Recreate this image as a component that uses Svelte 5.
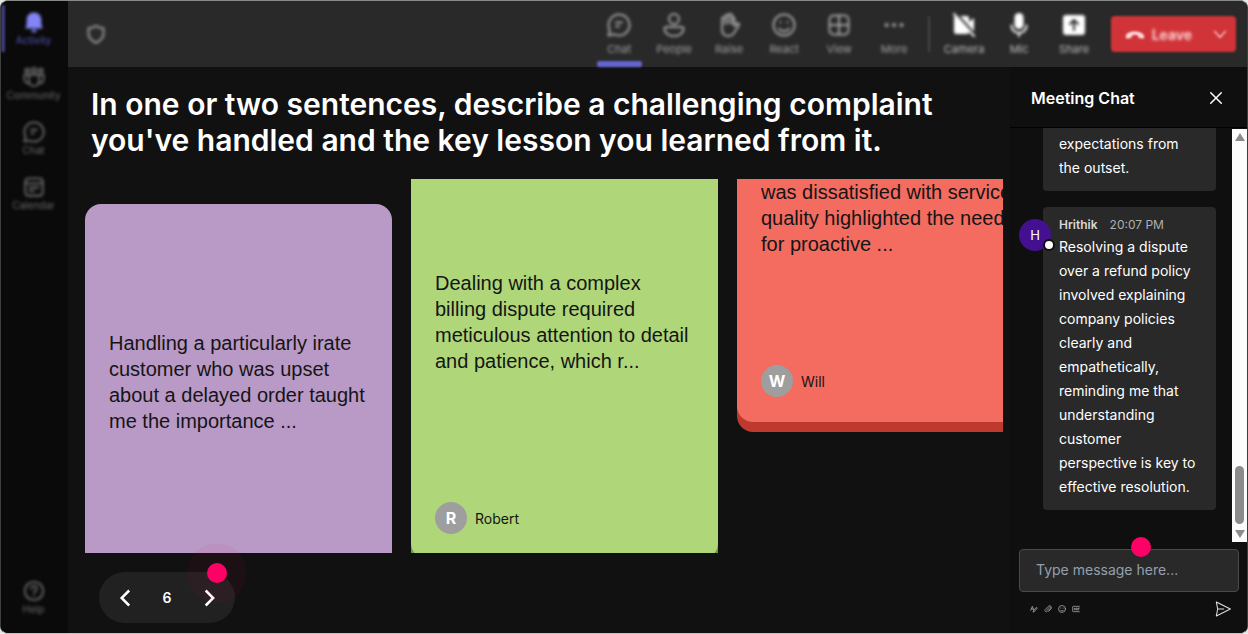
<script lang="ts">
  interface Item { id: string; label: string; }
  interface Message { name: string; time?: string; text: string; }

  const navItems: Item[] = [
    { id: 'bell', label: 'Activity' },
    { id: 'community', label: 'Community' },
    { id: 'chat', label: 'Chat' },
    { id: 'calendar', label: 'Calendar' },
  ];

  const meetingTools: Item[] = [
    { id: 'chat', label: 'Chat' },
    { id: 'people', label: 'People' },
    { id: 'raise', label: 'Raise' },
    { id: 'react', label: 'React' },
    { id: 'view', label: 'View' },
    { id: 'more', label: 'More' },
  ];

  const deviceTools: Item[] = [
    { id: 'camera', label: 'Camera' },
    { id: 'mic', label: 'Mic' },
    { id: 'share', label: 'Share' },
  ];

  // offset is how far the column has scrolled within the board
  const cards = [
    {
      tone: 'lilac', offset: 25, height: 414, author: '',
      text: 'Handling a particularly irate customer who was upset about a delayed order taught me the importance ...',
    },
    {
      tone: 'green', offset: -36, height: 416, author: 'Robert',
      text: 'Dealing with a complex billing dispute required meticulous attention to detail and patience, which r...',
    },
    {
      tone: 'red', offset: -133, height: 376, author: 'Will',
      text: 'Working with a client who was dissatisfied with service quality highlighted the need for proactive ...',
    },
  ];

  // a message without a time continues the one before it
  const messages: Message[] = [
    { name: 'Julia', text: 'I now set clear expectations from the outset.' },
    {
      name: 'Hrithik', time: '20:07 PM',
      text: 'Resolving a dispute over a refund policy involved explaining company policies clearly and empathetically, reminding me that understanding customer perspective is key to effective resolution.',
    },
  ];

  let activeNav = $state('bell');
  let activeTool = $state('chat');
  let page = $state(6);
  let draft = $state('');
</script>

{#snippet icon(id: string)}
  <svg class="icon" viewBox="0 0 24 24" fill="none" stroke="currentColor" stroke-width="2" stroke-linecap="round" stroke-linejoin="round" aria-hidden="true">
    {#if id === 'bell'}
      <path d="M12 1.500c-5 0-8 3.700-8 8v5L2.500 19h19L20 14.500v-5c0-4.300-3-8-8-8zM9 20.500a3 3 0 0 0 6 0z" fill="currentColor" stroke="none" />
    {:else if id === 'community'}
      <path d="M6.500 9.500h11v7a5.500 5.500 0 0 1-11 0zM6 9.500H1.500v5a4.500 4.500 0 0 0 5 4.500M18 9.500h4.500v5a4.500 4.500 0 0 1-5 4.500" />
      <circle cx="12" cy="4.500" r="2.500" /><circle cx="4.500" cy="5" r="2" /><circle cx="19.500" cy="5" r="2" />
    {:else if id === 'chat'}
      <path d="M12 1.500a10.500 10.500 0 1 1-5 19.700L1.500 22.500l1.300-5.500A10.500 10.500 0 0 1 12 1.500z" /><path d="M9 9.500h6M9 13.500h3" />
    {:else if id === 'calendar'}
      <rect x="2.500" y="2.500" width="19" height="19" rx="3.500" /><path d="M2.500 8h19M7 12.500h10M7 16.500h5" />
    {:else if id === 'help'}
      <circle cx="12" cy="12" r="10" /><path d="M9 9.500a3 3 0 1 1 4.500 2.600c-1 .6-1.500 1-1.500 2.200M12 17.300v.1" />
    {:else if id === 'people'}
      <circle cx="12" cy="6" r="5" /><path d="M4 14h16a1.500 1.500 0 0 1 1.500 1.500c0 4.500-4 7.500-9.500 7.500s-9.500-3-9.500-7.500A1.500 1.500 0 0 1 4 14z" />
    {:else if id === 'raise'}
      <path d="M5 12V6a1.500 1.500 0 0 1 3.300 0V3.500a1.500 1.500 0 0 1 3.300 0V2.500a1.500 1.500 0 0 1 3.300 0v2a1.500 1.500 0 0 1 2.600 1V13l2.500-2.500c1.500-.8 2.500.5 2 1.500l-5 8c-1.500 2.300-3 3-5.500 3-4.500 0-6.500-3-6.500-7z" />
      <path d="M8.300 6v5M11.600 3.500v7M15 4.500V11" />
    {:else if id === 'react'}
      <circle cx="12" cy="12" r="10.500" /><path d="M7 15.500c2 3.500 8 3.500 10 0M8.500 9v.5M15.500 9v.5" />
    {:else if id === 'view'}
      <rect x="2.500" y="2.500" width="19" height="19" rx="4" /><path d="M12 2.500v19M2.500 12h19" />
    {:else if id === 'more'}
      <path d="M4.500 12h.1M12 12h.1M19.500 12h.1" stroke-width="4" />
    {:else if id === 'camera'}
      <path d="M2 5a2 2 0 0 1 2-2h11a2 2 0 0 1 2 2v4l5-4v14l-5-4v4a2 2 0 0 1-2 2H4a2 2 0 0 1-2-2z" fill="currentColor" stroke="none" />
      <path d="M6 3l17 19" stroke="#292929" stroke-width="3" /><path d="M2 1l20 22" />
    {:else if id === 'mic'}
      <rect x="7.500" y="0" width="9" height="16" rx="4.500" fill="currentColor" stroke="none" />
      <path d="M4.500 12.500a7.500 7.500 0 0 0 15 0M12 20v3" />
    {:else if id === 'share'}
      <rect x="1" y="2" width="22" height="20" rx="3" fill="currentColor" stroke="none" />
      <path d="M12 17V7M8 11l4-4 4 4" stroke="#292929" />
    {:else if id === 'shield'}
      <path d="M12 2c2.500 2 5.500 3 9 3v6c0 5.500-3.500 9-9 11.500C6.500 20 3 16.500 3 11V5c3.500 0 6.500-1 9-3z" stroke-width="3" />
    {:else if id === 'hangup'}
      <path d="M1 15c-.3-8 21.300-8 22 0 .1 2.300-1 2.800-2.500 2.500l-3.300-.8c-1.200-.4-1.700-1.200-1.700-3.200-2-.9-5-.9-7 0 0 2-.5 2.800-1.700 3.200l-3.300.8C2 17.800 1 17.300 1 15z" fill="currentColor" stroke="none" />
    {:else if id === 'down'}
      <path d="M4 8l8 9 8-9" />
    {:else if id === 'prev'}
      <path d="M17 3l-9 9 9 9" stroke-width="3" stroke-linecap="butt" stroke-linejoin="miter" />
    {:else if id === 'next'}
      <path d="M8 3l9 9-9 9" stroke-width="3" stroke-linecap="butt" stroke-linejoin="miter" />
    {:else if id === 'close'}
      <path d="M3 3l18 18M21 3L3 21" stroke-width="2.500" />
    {:else if id === 'format'}
      <path d="M2 16l5-12 4 11M4 12h6M10 21l3-1 9-11-3-2-8 10z" />
    {:else if id === 'attach'}
      <path d="M8 15l8-8a2 2 0 0 1 3 3l-9 9a4 4 0 0 1-6-6l9-9a5.500 5.500 0 0 1 8 8l-7 7" />
    {:else if id === 'gif'}
      <path d="M22 4H4a2 2 0 0 0-2 2v12a2 2 0 0 0 2 2h18M10 10H7v4h3v-2M14 9v6M18 15V9h3M18 12h3" />
    {:else if id === 'send'}
      <path d="M2 1.500L23 12 2 22.500 4 12zM4 12h9" stroke-width="1.600" />
    {/if}
  </svg>
{/snippet}

<div class="app">
  <nav class="sidebar" aria-label="Workspace">
    {#each navItems as item (item.label)}
      <button class="nav-btn" class:active={activeNav === item.id} onclick={() => (activeNav = item.id)}>
        {@render icon(item.id)}
        <span>{item.label}</span>
      </button>
    {/each}
    <button class="nav-btn help">
      {@render icon('help')}
      <span>Help</span>
    </button>
  </nav>

  <div class="workspace">
    <header class="topbar">
      <div class="shield">{@render icon('shield')}</div>
      <div class="tools">
        {#each meetingTools as tool (tool.id)}
          <button class="tool" class:active={activeTool === tool.id} onclick={() => (activeTool = tool.id)}>
            {@render icon(tool.id)}
            <span>{tool.label}</span>
          </button>
        {/each}
      </div>
      <div class="divider"></div>
      <div class="tools devices">
        {#each deviceTools as tool (tool.id)}
          <button class="tool">
            {@render icon(tool.id)}
            <span>{tool.label}</span>
          </button>
        {/each}
      </div>
      <div class="leave">
        <button class="leave-btn">{@render icon('hangup')}<span>Leave</span></button>
        <button class="leave-menu" aria-label="Leave options">{@render icon('down')}</button>
      </div>
    </header>

    <div class="content">
      <main class="stage">
        <h1>In one or two sentences, describe a challenging complaint you've handled and the key lesson you learned from it.</h1>

        <div class="board">
          {#each cards as card (card.tone)}
            <article class="card {card.tone}" style="margin-top: {card.offset}px; height: {card.height}px">
              <p>{card.text}</p>
              <footer>
                {#if card.author}
                  <span class="initial">{card.author[0]}</span>
                  <span>{card.author}</span>
                {/if}
              </footer>
            </article>
          {/each}
        </div>

        <div class="pager">
          <button aria-label="Previous page" onclick={() => (page = Math.max(1, page - 1))}>{@render icon('prev')}</button>
          <span class="page">{page}</span>
          <button aria-label="Next page" onclick={() => (page += 1)}>{@render icon('next')}</button>
          <span class="hotspot halo"></span>
        </div>
      </main>

      <aside class="chat">
        <div class="chat-head">
          <h2>Meeting Chat</h2>
          <button aria-label="Close chat">{@render icon('close')}</button>
        </div>

        <div class="chat-body">
          <div class="messages">
            {#each messages as msg (msg.name)}
              <div class="message">
                {#if msg.time}
                  <div class="avatar">{msg.name[0]}<i></i></div>
                {/if}
                <div class="bubble">
                  {#if msg.time}
                    <div class="meta"><b>{msg.name}</b><time>{msg.time}</time></div>
                  {/if}
                  <p>{msg.text}</p>
                </div>
              </div>
            {/each}
          </div>
          <div class="scrollbar">
            <svg viewBox="0 0 10 8" aria-hidden="true"><path d="M5 0l5 8H0z" fill="#8b8b8b" /></svg>
            <div class="thumb"></div>
            <svg viewBox="0 0 10 8" aria-hidden="true"><path d="M0 0h10L5 8z" fill="#8b8b8b" /></svg>
          </div>
        </div>

        <div class="composer">
          <div class="field">
            <input type="text" placeholder="Type message here..." aria-label="Message" bind:value={draft} />
            <span class="hotspot"></span>
          </div>
          <div class="actions">
            <button aria-label="Format">{@render icon('format')}</button>
            <button aria-label="Attach">{@render icon('attach')}</button>
            <button aria-label="Emoji">{@render icon('react')}</button>
            <button aria-label="GIF">{@render icon('gif')}</button>
            <button class="send" aria-label="Send">{@render icon('send')}</button>
          </div>
        </div>
      </aside>
    </div>
  </div>
</div>

<style>
  :global(body) { background: #e4e8e6; }
  :global(*) { box-sizing: border-box; }
  .app {
    display: flex;
    height: 100vh;
    min-height: 480px;
    overflow: hidden;
    border: 1px solid #3c3f3e;
    border-top-color: #858a88;
    border-bottom-color: #c4c4c4;
    border-radius: 8px;
    background: #111;
    color: #fff;
    font-family: Inter, "Liberation Sans", sans-serif;
  }
  button {
    display: flex;
    align-items: center;
    justify-content: center;
    padding: 0;
    border: none;
    background: none;
    color: inherit;
    font: inherit;
    cursor: pointer;
  }
  h1, h2, p { margin: 0; }
  .icon { display: block; width: 22px; height: 22px; flex-shrink: 0; }

  .sidebar {
    display: flex;
    flex-direction: column;
    width: 67px;
    flex-shrink: 0;
    padding: 4px 0 12px;
    background: #0a0a0a;
  }
  .nav-btn {
    flex-direction: column;
    height: 47px;
    margin-bottom: 8px;
    border-left: 4px solid transparent;
    padding-right: 6px;
    color: #6c6c6c;
    font-size: 10px;
    line-height: 14px;
    filter: blur(1px);
  }
  .nav-btn span, .tool span, .leave span, .tool .icon, .nav-btn .icon, .shield .icon { filter: blur(1px); }
  .nav-btn.active { border-left-color: #3c3e80; color: #5557b8; }
  .nav-btn.active .icon { color: #8385f5; }
  .nav-btn.help { margin: auto 0 0; }

  .workspace { display: flex; flex: 1; flex-direction: column; min-width: 0; }
  .topbar {
    display: flex;
    align-items: center;
    height: 66px;
    flex-shrink: 0;
    padding-right: 11px;
    background: #292929;
  }
  .shield { margin: 0 auto 0 18px; color: #858585; filter: blur(1px); }
  .shield .icon { width: 20px; height: 20px; }
  .tools { display: flex; align-self: stretch; filter: blur(1px); }
  .tool {
    flex-direction: column;
    gap: 5px;
    width: 55px;
    padding-top: 1px;
    color: #a0a0a0;
    font-size: 11px;
    line-height: 14px;
  }
  .tool .icon { width: 24px; height: 24px; }
  .tool.active { position: relative; }
  .tool.active::after {
    content: "";
    position: absolute;
    left: 5px;
    right: 5px;
    bottom: 0;
    height: 6px;
    border-radius: 2px;
    background: #6265d0;
  }
  .devices .tool { color: #bcbcbc; }
  .devices .icon { color: #fff; }
  .divider { width: 2px; height: 36px; margin: 0 7px 0 6px; background: #444; filter: blur(1px); }
  .leave {
    display: flex;
    height: 36px;
    margin-left: 9px;
    border-radius: 4px;
    background: #d13438;
    color: #ffdcdc;
    filter: blur(1px);
  }
  .leave-btn { gap: 7px; padding-left: 14px; font-size: 14px; font-weight: 600; }
  .leave-btn .icon { width: 20px; height: 20px; }
  .leave-menu { width: 32px; margin-left: 12px; }
  .leave-menu .icon { width: 16px; height: 16px; }

  .content { display: flex; flex: 1; min-height: 0; }
  .stage {
    display: flex;
    flex: 1;
    flex-direction: column;
    align-items: flex-start;
    min-width: 0;
    padding: 19px 7px 10px 17px;
  }
  h1 { padding: 0 6px; font-size: 30px; font-weight: 600; line-height: 36px; }
  .board {
    display: flex;
    flex: 1;
    align-items: flex-start;
    gap: 19px;
    width: 100%;
    min-height: 0;
    margin: 21px 0 19px;
    overflow: hidden;
  }
  .card {
    display: flex;
    flex-direction: column;
    width: 307px;
    flex-shrink: 0;
    padding: 24px 24px 25px;
    border-radius: 16px;
    color: #151515;
  }
  .card p {
    display: flex;
    flex: 1;
    align-items: center;
    margin-bottom: 25px;
    font: 20px/26px "Liberation Sans", Arial, sans-serif;
  }
  .card footer { display: flex; align-items: center; gap: 8px; height: 32px; font-size: 14px; }
  .initial {
    display: flex;
    align-items: center;
    justify-content: center;
    width: 32px;
    height: 32px;
    border-radius: 50%;
    background: #9e9e9e;
    color: #fff;
    font-size: 16px;
    font-weight: 700;
  }
  .lilac { background: #b999c6; box-shadow: 0 10px #8c65a0; }
  .green { background: #afd779; box-shadow: 0 10px #6f9c38; }
  .red { background: #f46b60; box-shadow: 0 10px #c0392f; }

  .pager {
    position: relative;
    display: flex;
    align-items: center;
    justify-content: space-between;
    width: 136px;
    height: 51px;
    margin-left: 14px;
    padding: 0 16px;
    border-radius: 26px;
    background: #212121;
  }
  .pager .icon { width: 20px; height: 20px; }
  .page { font-size: 14px; font-weight: 600; }
  .hotspot {
    position: absolute;
    top: -12px;
    left: 51%;
    width: 20px;
    height: 20px;
    border-radius: 50%;
    background: #ff0066;
    pointer-events: none;
  }
  .hotspot.halo { top: -9px; left: auto; right: 8px; box-shadow: 0 0 0 19px rgba(255, 0, 102, 0.05); }

  .chat {
    display: flex;
    flex-direction: column;
    width: 237px;
    flex-shrink: 0;
    background: #0f0f0f;
  }
  .chat-head {
    display: flex;
    align-items: center;
    justify-content: space-between;
    height: 61px;
    flex-shrink: 0;
    padding: 2px 24px 0 21px;
    border-bottom: 1px solid #000;
  }
  h2 { font-size: 16px; font-weight: 600; }
  .chat-head .icon { width: 14px; height: 14px; }
  .chat-body { display: flex; flex: 1; min-height: 0; }
  .messages {
    display: flex;
    flex: 1;
    flex-direction: column;
    justify-content: flex-end;
    gap: 16px;
    min-width: 0;
    padding: 0 16px 32px 9px;
    overflow: hidden;
  }
  .message { position: relative; flex-shrink: 0; padding-left: 24px; }
  .bubble { padding: 8px 16px 11px; border-radius: 4px; background: #292929; }
  .bubble p { font-size: 14px; line-height: 24px; }
  .meta { display: flex; gap: 12px; color: #b0b0b0; font-size: 12px; line-height: 20px; }
  .meta b { color: #d8d8d8; font-weight: 600; }
  .avatar {
    position: absolute;
    top: 12px;
    left: 0;
    display: flex;
    align-items: center;
    justify-content: center;
    width: 32px;
    height: 32px;
    border-radius: 50%;
    background: #43118f;
    font-size: 13px;
  }
  .avatar i {
    position: absolute;
    right: -4px;
    bottom: 0;
    width: 12px;
    height: 12px;
    border: 2px solid #0f0f0f;
    border-radius: 50%;
    background: #fff;
  }
  .scrollbar {
    display: flex;
    flex-direction: column;
    align-items: center;
    width: 15px;
    margin-top: 1px;
    padding: 4px 0;
    background: #fcfcfc;
  }
  .scrollbar svg { width: 10px; height: 8px; }
  .thumb { width: 9px; height: 58px; margin: auto 0 6px; border-radius: 5px; background: #8b8b8b; }

  .composer { flex-shrink: 0; padding: 7px 8px 16px 9px; }
  .field { position: relative; }
  input {
    display: block;
    width: 100%;
    height: 43px;
    padding: 0 16px 2px;
    border: 1px solid #4a4a4a;
    border-radius: 4px;
    outline: none;
    background: #292929;
    color: #fff;
    font: 14px Inter, "Liberation Sans", sans-serif;
  }
  input::placeholder { color: #94a0ae; opacity: 1; }
  .actions { display: flex; align-items: center; gap: 6px; margin-top: 9px; padding: 0 8px 0 11px; color: #c0c0c0; }
  .actions .icon { width: 8px; height: 8px; }
  .actions .send { margin-left: auto; color: #e0e0e0; }
  .send .icon { width: 16px; height: 16px; }
</style>
